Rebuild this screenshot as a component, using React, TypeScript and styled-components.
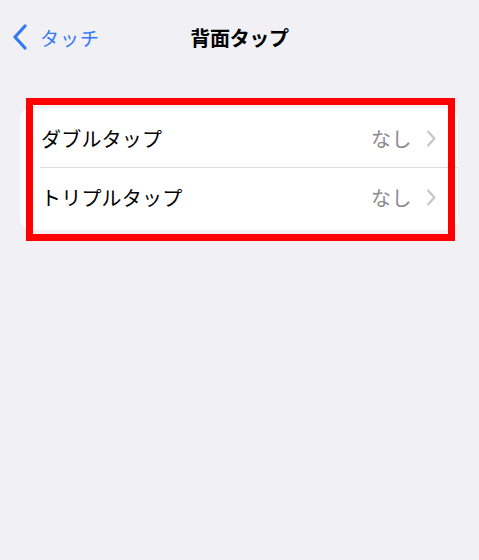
import React from 'react'
import styled, { createGlobalStyle } from 'styled-components'

const GlobalStyle = createGlobalStyle`
  html, body {
    margin: 0;
    padding: 0;
    background: #f0f0f5;
  }
  body {
    font-family: "Noto Sans CJK JP", "Noto Sans", sans-serif;
  }
`

// whole screen
const Screen = styled.div`
  width: 479px;
  height: 560px;
  background: #f0f0f5;
  display: flex;
  flex-direction: column;
  overflow: hidden;
`

// navigation bar: back button on the left, title centered
const NavBar = styled.div`
  position: relative;
  height: 74px;
  display: flex;
  align-items: center;
  justify-content: center;
`

const BackButton = styled.div`
  position: absolute;
  left: 12px;
  top: 0;
  bottom: 0;
  display: flex;
  align-items: center;
  gap: 12px;
  color: #3478f6;
  font-size: 19px;
  letter-spacing: 1px;
`

const Title = styled.h1`
  margin: 0;
  font-size: 20px;
  font-weight: 700;
  color: #000;
  letter-spacing: -0.3px;
`

const Section = styled.div`
  position: relative;
  margin: 34px 21px 0 20px;
`

const Card = styled.div`
  background: #fff;
  border-radius: 11px;
  overflow: hidden;
`

const Row = styled.div<{ $height: number; $shift: number }>`
  height: ${p => p.$height}px;
  box-sizing: border-box;
  padding: ${p => (p.$shift > 0 ? `0 22px ${p.$shift}px 21px` : `${-p.$shift}px 22px 0 21px`)};
  display: flex;
  align-items: center;
  font-size: 20px;
  color: #000;
`

const Label = styled.span`
  flex: 1;
  letter-spacing: 0.2px;
`

const Value = styled.span`
  color: #8a8a8e;
  margin-right: 14px;
  letter-spacing: 0.5px;
`

const Separator = styled.div`
  height: 1px;
  margin-left: 20px;
  background: #dcdcdf;
`

// red annotation frame drawn over the card
const Highlight = styled.div`
  position: absolute;
  left: 6px;
  right: 3px;
  top: -10px;
  bottom: -11px;
  border: 7px solid #ff0000;
  pointer-events: none;
`

const BackChevron = () => (
  <svg width="16" height="26" viewBox="0 0 16 26">
    <path d="M13 2 L3 13 L13 24" fill="none" stroke="#3478f6" strokeWidth="3.2" strokeLinecap="round" strokeLinejoin="round" />
  </svg>
)

const RowChevron = () => (
  <svg width="10" height="17" viewBox="0 0 10 17">
    <path d="M2 1.5 L8.5 8.5 L2 15.5" fill="none" stroke="#c4c4c7" strokeWidth="2" strokeLinecap="round" strokeLinejoin="round" />
  </svg>
)

const rows = [
  { label: 'ダブルタップ', value: 'なし', height: 59, shift: -2 },
  { label: 'トリプルタップ', value: 'なし', height: 62, shift: 4 },
]

export default function App () {
  return (
    <Screen>
      <GlobalStyle />
      <NavBar>
        <BackButton>
          <BackChevron />
          <span>タッチ</span>
        </BackButton>
        <Title>背面タップ</Title>
      </NavBar>
      <Section>
        <Card>
          {rows.map((r, i) => (
            <React.Fragment key={r.label}>
              {i > 0 && <Separator />}
              <Row $height={r.height} $shift={r.shift}>
                <Label>{r.label}</Label>
                <Value>{r.value}</Value>
                <RowChevron />
              </Row>
            </React.Fragment>
          ))}
        </Card>
        <Highlight />
      </Section>
    </Screen>
  )
}
